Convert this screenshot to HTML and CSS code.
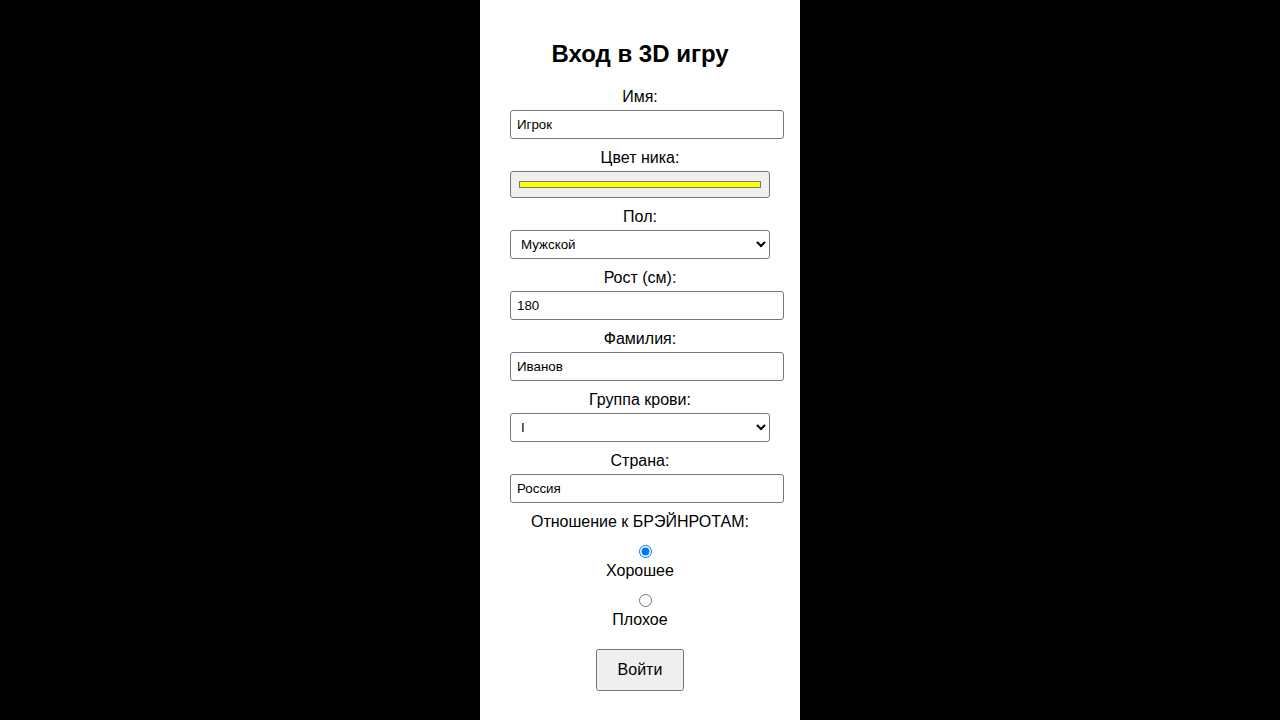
FILE: index.html
```html
<!DOCTYPE html>
<html lang="ru">
<head>
    <meta charset="UTF-8">
    <meta name="viewport" content="width=device-width, initial-scale=1.0">
    <title>Вход в 3D игру</title>
    <link rel="stylesheet" href="styles.css">
</head>
<body>
    <div class="login-box">
        <h2>Вход в 3D игру</h2>

        <form id="loginForm">
            <label for="name">Имя:</label>
            <input class="field" type="text" id="name" value="Игрок">

            <label for="nickColor">Цвет ника:</label>
            <input class="field color-field" type="color" id="nickColor" value="#ffff00">

            <label for="gender">Пол:</label>
            <select class="field" id="gender">
                <option>Мужской</option>
                <option>Женский</option>
            </select>

            <label for="height">Рост (см):</label>
            <input class="field" type="number" id="height" value="180">

            <label for="surname">Фамилия:</label>
            <input class="field" type="text" id="surname" value="Иванов">

            <label for="blood">Группа крови:</label>
            <select class="field" id="blood">
                <option>I</option>
                <option>II</option>
                <option>III</option>
                <option>IV</option>
            </select>

            <label for="country">Страна:</label>
            <input class="field" type="text" id="country" value="Россия">

            <label>Отношение к БРЭЙНРОТАМ:</label>
            <div class="choice">
                <input type="radio" name="attitude" id="good" checked>
                <label for="good">Хорошее</label>
            </div>
            <div class="choice">
                <input type="radio" name="attitude" id="bad">
                <label for="bad">Плохое</label>
            </div>

            <button type="submit" class="login-btn">Войти</button>
        </form>
    </div>
</body>
</html>
```

FILE: styles.css
```css
body {
    margin: 0;
    background: #000;
    display: flex;
    justify-content: center;
    font-family: "Liberation Sans", Arial, sans-serif;
    color: #000;
}

.login-box {
    box-sizing: border-box;
    width: 320px;
    min-height: 100vh;
    padding: 20px 30px;
    background: #fff;
    text-align: center;
}

.login-box h2 {
    font-size: 24px;
    margin: 20px 0;
}

label {
    display: block;
    font-size: 16px;
    line-height: 18px;
    margin: 10px 0 4px;
}

.field {
    display: block;
    width: 100%;
    margin: 0;
    padding: 6px;
    font-family: inherit;
    font-size: 13.33px;
    line-height: 15px;
    color: #000;
    border: 1px solid #767676;
    border-radius: 3px;
}

select.field {
    height: 29px;
    padding: 0 6px;
    background: #fff;
}

.color-field {
    height: 27px;
    padding: 5px 6px;
    background: #efefef;
    cursor: pointer;
}

/* radio with its caption underneath */
.choice {
    display: flex;
    flex-direction: column;
    align-items: center;
    margin-top: 12px;
}

.choice input {
    margin: 2px 0 4px 10px;
}

.choice label {
    margin: 0;
    line-height: 18.4px;
}

.login-btn {
    display: block;
    margin: 19px auto 0;
    padding: 10px 20px;
    font-family: inherit;
    font-size: 16px;
    cursor: pointer;
}
```
